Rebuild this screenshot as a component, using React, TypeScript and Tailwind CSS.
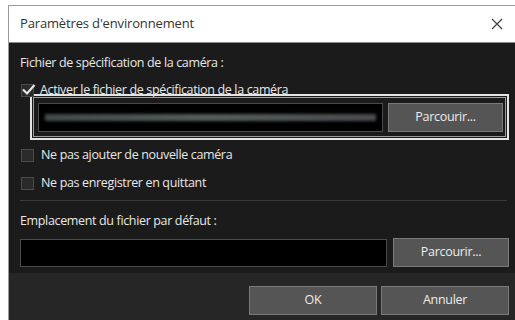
import React from 'react';

const font = { fontFamily: '"Open Sans", "Noto Sans", sans-serif' };

const Checkbox: React.FC<{ checked?: boolean }> = ({ checked }) => (
  <div className="relative w-[13px] h-[13px] border border-[#4a4a4a] bg-[#2a2a2a] shrink-0">
    {checked && (
      <svg className="absolute -left-[1px] -top-[3px]" width="15" height="15" viewBox="0 0 15 15">
        <path d="M2 7.5 L6 11.5 L13.5 3" fill="none" stroke="#e6e6e6" strokeWidth="2.2" />
      </svg>
    )}
  </div>
);

const Button: React.FC<{ label: string; className?: string }> = ({ label, className }) => (
  <button
    className={`h-[29px] bg-[#555555] border border-[#7a7a7a] text-[12.5px] text-[#ececec] tracking-[-0.3px] ${className ?? ''}`}
  >
    {label}
  </button>
);

export default function App() {
  return (
    <div className="w-[515px] h-[320px] bg-white pt-[5px] pl-[8px] overflow-hidden" style={font}>
      <div className="w-[507px] h-[315px] border-l border-t border-[#9a9a9a] flex flex-col">
        {/* title bar */}
        <div className="h-[37px] bg-white border-b border-[#8a8a8a] flex items-center justify-between pl-[11px] pr-[12px] shrink-0">
          <span className="text-[13px] text-[#333] tracking-[-0.15px]">Paramètres d'environnement</span>
          <svg width="12" height="12" viewBox="0 0 12 12">
            <path d="M1 1 L11 11 M11 1 L1 11" stroke="#444" strokeWidth="1.3" />
          </svg>
        </div>

        {/* body */}
        <div className="bg-[#1b1b1b] flex-1 flex flex-col pl-[11px] pr-[6px] text-[#e8e8e8] text-[12.5px] tracking-[-0.35px]">
          <div className="mt-[12px] h-[16px] leading-[16px]">Fichier de spécification de la caméra :</div>

          <div className="mt-[11px] h-[16px] flex items-center gap-[6px] pl-[1px]">
            <Checkbox checked />
            <span className="leading-[16px]">Activer le fichier de spécification de la caméra</span>
          </div>

          <div className="ml-[10px] h-[46px] border-[2px] border-[#e4e4e4] p-[1px] -mt-[4px]">
            <div className="h-full border border-[#9c9c9c] flex items-center gap-[5px] pl-[4px] pr-[2px]">
              <div className="flex-1 h-[29px] bg-black border border-[#4a4a4a] flex items-center px-[6px] overflow-hidden">
                <div className="h-[7px] w-full bg-gradient-to-r from-[#5a6a6a] via-[#7a8580] to-[#6a6a72] opacity-70 blur-[1.5px]" />
              </div>
              <Button label="Parcourir..." className="w-[115px]" />
            </div>
          </div>

          <div className="mt-[7px] h-[16px] flex items-center gap-[7px] pl-[1px]">
            <Checkbox />
            <span className="leading-[16px]">Ne pas ajouter de nouvelle caméra</span>
          </div>
          <div className="mt-[12px] h-[16px] flex items-center gap-[7px] pl-[1px]">
            <Checkbox />
            <span className="leading-[16px]">Ne pas enregistrer en quittant</span>
          </div>

          <div className="mt-[9px] h-px bg-[#3a3a3a] mr-[2px]" />

          <div className="mt-[12px] h-[16px] leading-[16px]">Emplacement du fichier par défaut :</div>

          <div className="mt-[9px] flex items-center gap-[6px]">
            <div className="flex-1 h-[28px] bg-black border border-[#4a4a4a]" />
            <Button label="Parcourir..." className="w-[116px]" />
          </div>
        </div>

        {/* footer */}
        <div className="h-[47px] bg-[#262626] shrink-0 flex items-start justify-end gap-[4px] pt-[13px] pr-[6px]">
          <Button label="OK" className="w-[128px]" />
          <Button label="Annuler" className="w-[128px]" />
        </div>
      </div>
    </div>
  );
}
